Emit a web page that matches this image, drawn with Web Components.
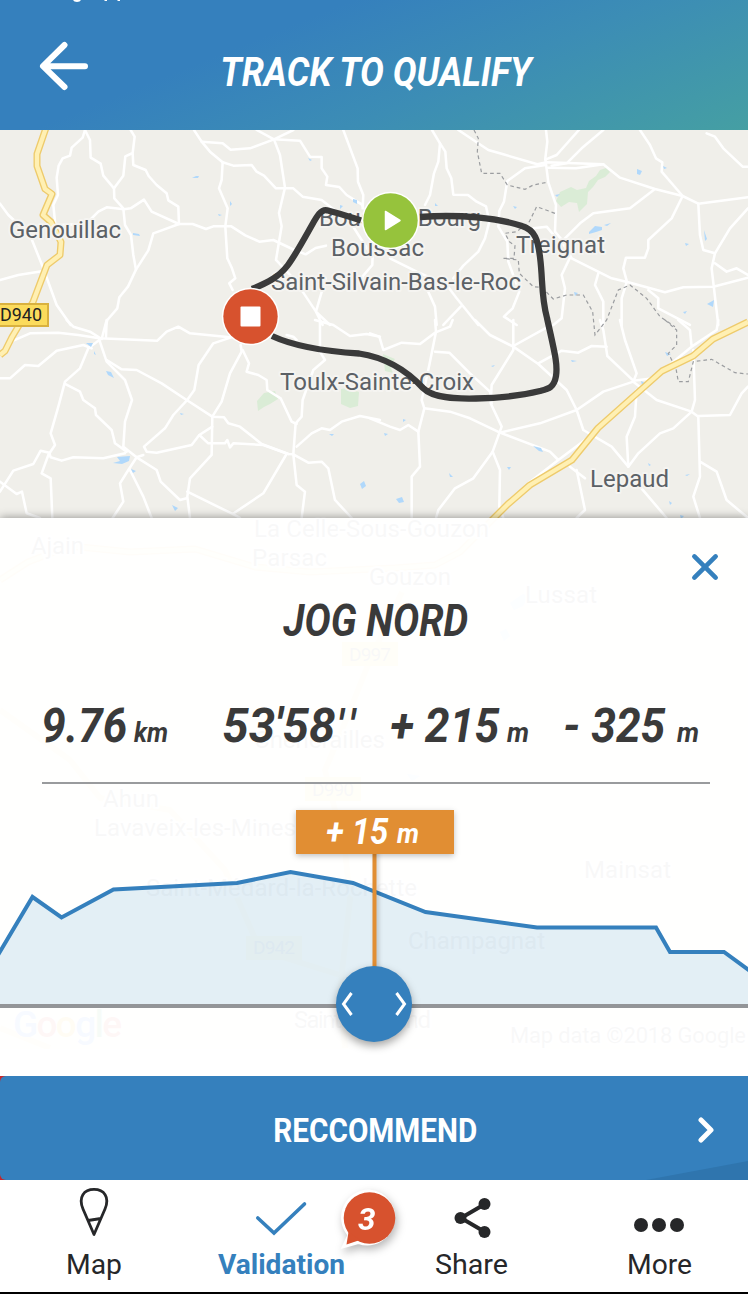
<!DOCTYPE html>
<html lang="en">
<head>
<meta charset="utf-8">
<title>Track to qualify</title>
<style>
html,body{margin:0;padding:0;background:#fff}
body{width:748px;height:1294px;overflow:hidden;font-family:Roboto,"Liberation Sans",sans-serif}
</style>
</head>
<body>
<track-screen></track-screen>
<script>
const define=(name,html)=>{
  const t=document.createElement('template');
  t.innerHTML=html;
  customElements.define(name,class extends HTMLElement{
    constructor(){super();this.attachShadow({mode:'open'}).appendChild(t.content.cloneNode(true));}
  });
};

/* One line of text set to an exact width; its box is cap height tall.
   With the "loose" attribute only the spacing is adjusted, not the glyphs. */
customElements.define('fit-text',class extends HTMLElement{
  connectedCallback(){
    const root=this.shadowRoot||this.attachShadow({mode:'open'});
    const w=+this.getAttribute('w'),s=+this.getAttribute('size');
    const h=Math.round(s*.711);
    root.innerHTML=`<style>:host{display:block;flex:none;width:${w}px;height:${h}px}svg{display:block;overflow:visible}
      text{font-family:Roboto,"Liberation Sans",sans-serif;font-size:${s}px;font-weight:${this.getAttribute('weight')||400};font-style:${this.hasAttribute('italic')?'italic':'normal'};fill:currentColor}</style>
      <svg width="${w}" height="${h}"><text x="${s<30?0:-.7}" y="${h-.4}" textLength="${w}" lengthAdjust="${this.hasAttribute('loose')?'spacing':'spacingAndGlyphs'}"></text></svg>`;
    root.querySelector('text').textContent=this.getAttribute('text');
  }
});

define('app-header',`<style>
:host{display:flex;box-sizing:border-box;height:130px;width:748px;color:#fff;background:linear-gradient(158deg,#3580bd 0%,#3580bd 33%,#3c8db5 62%,#459fa3 100%);align-items:flex-start}
.back{margin:41px 0 0 39px;width:50px;height:50px}
.title{margin:57px 0 0 132px}
.status{position:absolute;left:73px;top:0}
</style>
<svg class="status" width="50" height="3"><path d="M0 0H8Q7 2 4 2Q1 2 0 0ZM31.500 0h2.500v1h-2.500zM44.500 0h2.500v1h-2.500z" fill="#fff"/></svg>
<svg class="back" viewBox="0 0 50 50" fill="none" stroke="#fff" stroke-width="6" stroke-linecap="round" stroke-linejoin="round"><path d="M25.500 4 4 25.200 25.500 46M6 25.200H46"/></svg>
<fit-text class="title" text="TRACK TO QUALIFY" w="311" size="40.500" weight="700" italic></fit-text>`);

define('track-map',`<style>
:host{display:block}
svg{display:block;background:#f0efea}
.r path{fill:none;stroke:#fff;stroke-width:7.600;stroke-linejoin:round;stroke-linecap:round}
.w path{fill:#b0d8fb;stroke:none}
.d path{fill:none;stroke:#9b9da0;stroke-width:3.600;stroke-dasharray:11 9}
.y path{fill:none;stroke-linejoin:round}
text{font-family:Roboto,"Liberation Sans",sans-serif;font-size:24px;fill:#5c6166;paint-order:stroke;stroke:#f5f4f1;stroke-width:4px;stroke-linejoin:round}
.shield text{font-size:19px;fill:#222;stroke:none}
.shield rect{fill:#fbdb5c;stroke:#d9b13f;stroke-width:2}
.shield .far{stroke:none}
.shield .fart{fill:#5c6166}
.g text{stroke:none;font-size:37px;font-weight:500}
</style>
<svg width="748" height="919" viewBox="0 130 748 919">
<g fill="#daecd6">
<path d="M556 201 560 192 571 187 577 190 586 188 589 181 596 176 600 170 606 168 610 172 605 177 598 180 593 187 588 192 587 204 579 212 577 203 569 202 561 207Z"/>
<path d="M257 401 264 393 275 391 278 399 270 404 264 407 258 411Z"/>
<path d="M341 389 348 388 359 392 358 406 350 408 341 404Z"/>
<path d="M383 354 395 359 390 366 393 373 385 371Z"/>
</g>
<g class="r" transform="translate(0,125) scale(.3333)">
<path d="M255 15 248 38 215 68 210 92 188 100 176 122 170 158 174 210 160 240 166 300"/>
<path d="M255 15 270 45 272 98 302 116 310 152 342 190 343 220 370 250 375 300 393 330 400 390 408 434"/>
<path d="M392 15 404 35 398 84 400 120 437 135 446 153 470 180 500 205 505 226 535 245 537 297M398 84 376 94 370 152 342 190"/>
<path d="M180 300 240 298 270 285 295 260 320 247 372 253 392 250 432 224 455 260 537 297 578 297 618 312 640 304 694 304 736 331 778 350 820 345 877 372 917 388 947 369 978 362"/>
<path d="M537 297 485 316 460 325 445 376 408 434 384 485 358 517 352 550 322 585 318 600"/>
<path d="M582 15 605 50 630 80 668 112 700 122 755 120 770 140 792 152 828 190 880 190 908 215 965 225 1010 260 1050 290 1085 345 1118 395 1117 420 1088 454 1085 495"/>
<path d="M605 50 668 55 692 74 750 70 822 43 880 15"/>
<path d="M770 15 822 43 840 90 855 188 837 264 845 304 828 405 880 460 908 500 948 560 968 600M977 460 948 560 990 600"/>
<path d="M822 43 900 47 930 95 965 96 965 130 982 155 978 180 1018 186 1040 210 1085 238 1090 250M1030 15 1073 130 1074 170 1090 210 1088 250"/>
<path d="M668 112 665 165 657 190 683 250 676 304 682 400 696 430 706 460 688 475 698 495"/>
<path d="M0 236 25 270 90 330 130 430 170 540 212 600M0 465 55 450 130 438"/>
</g>
<g class="r" transform="translate(370,125) scale(.3333)">
<path d="M186 15 210 55 205 110 192 145 180 210 165 240"/>
<path d="M210 55 226 80 230 130 244 160 250 209 294 210 320 230 348 244 358 290 345 340 325 380 280 422 250 460"/>
<path d="M265 15 310 45 355 75 400 88 502 118 530 112 700 118 750 158 855 192 938 213 985 236 1134 217"/>
<path d="M528 15 532 50 526 100 535 172 558 240 555 320 580 350"/>
<path d="M640 0 560 90 526 104M700 15 635 70 590 115 545 122"/>
<path d="M526 120 465 130 412 168 402 230 388 258 385 305 412 350 415 410 448 500 428 550 402 575 440 600"/>
<path d="M600 390 575 350 630 295 670 265 780 250 855 192"/>
<path d="M535 128 618 130 700 118"/>
<path d="M810 15 840 60 858 100 877 112 875 140 938 213 905 280 835 345 835 370 825 398 768 398 760 430 770 467"/>
<path d="M1010 25 1035 35 1060 70 1118 125 1134 125M1134 250 1080 310 1035 385 1025 430 1045 600M1035 415 1070 440 1100 430 1134 450"/>
<path d="M985 236 990 330 1000 375 1035 385"/>
<path d="M490 310 530 305 555 335M600 390 605 400 725 460 775 472 885 502 940 487 1030 485 1134 458"/>
<path d="M600 398 575 450 585 490 575 580 550 600M685 445 675 480 700 530 700 600M770 472 755 520 755 600M835 495 865 520 865 550 960 600"/>
<path d="M60 400 140 440 230 480 260 520 325 600M272 545 220 600M170 490 195 545 200 600"/>
</g>
<g class="r" transform="translate(0,320) scale(.3333)">
<path d="M40 62 90 40 175 38 235 45 298 55 472 62 500 35 535 20 570 40 690 52"/>
<path d="M200 0 220 20 270 35 305 57 320 0M320 0 318 50"/>
<path d="M298 60 265 85 240 145 195 185 175 260 152 340 165 375 145 405 125 460 152 475 157 594"/>
<path d="M0 175 30 175 75 135 115 138 170 92 250 75 275 85"/>
<path d="M298 60 320 125 375 180 396 240 375 305 370 380 410 412 430 405"/>
<path d="M320 120 365 148 410 150 485 190 560 240 637 290 672 292 685 310 720 320 785 372 865 402 880 403"/>
<path d="M195 192 240 215 250 240 285 265 288 285 335 330 345 370 380 395"/>
<path d="M700 50 640 70 596 135 583 210 560 242 520 285 495 325 432 380 440 395 470 398 575 375 598 345 637 320"/>
<path d="M722 75 725 95 690 160 665 245 637 290 635 405 570 475 562 530 570 594M598 345 625 370 675 370 682 360 690 382 700 370 790 375 865 402"/>
<path d="M728 90 747 130 740 155 775 165 800 180 802 210 842 235 875 305 890 312"/>
<path d="M0 515 40 452 100 432 122 392 148 398 152 412 185 422 220 412 310 415 375 400"/>
<path d="M0 485 50 522 66 515 80 580 120 594M410 412 385 450 360 490 370 545 338 594M390 450 430 530 455 594"/>
<path d="M410 412 470 450 482 485 540 540 560 535M562 515 698 582 720 594M698 582 790 520 858 405"/>
<path d="M880 403 887 310 905 290 908 240 940 150 975 120 960 95 960 0M880 403 890 495 915 515 905 594M880 403 925 428 965 425 985 445 1005 540 1055 594"/>
<path d="M890 380 935 340 965 325 990 330 1025 305 1080 288 1140 300M945 0 1000 15 1050 48 1100 42 1140 50M860 45 880 50 890 60"/>
</g>
<g class="r" transform="translate(370,320) scale(.3333)">
<path d="M0 40 28 50 40 90 95 68 150 72 195 38 240 20 248 0M195 0 198 35 178 135 155 240 163 265 145 335 150 440 125 470 125 594"/>
<path d="M315 0 360 45 430 80 505 132 590 210 620 270 640 330 725 380 775 440M430 0 430 90 365 195 362 250 395 320 368 395 390 450 388 560 400 594"/>
<path d="M195 95 238 98 300 160 360 215 365 250M430 78 535 20 540 0M505 130 575 92 625 98 665 78 710 80"/>
<path d="M163 265 240 275 300 295 390 338 540 395 565 420 645 360 675 340M390 338 510 310 620 270 700 215 790 185 800 160 765 60 750 0M565 420 475 490M368 395 310 475 255 505 205 570 198 594"/>
<path d="M690 0 700 30 712 108 790 182 850 175 965 80 1040 30 1045 0M965 80 960 30 925 0M790 185 860 240 965 275 975 240 970 90"/>
<path d="M800 210 795 290 770 350 775 440 805 400 870 340 910 325 965 275 985 290 990 470 970 530 990 594M985 288 1080 285 1115 220 1134 200M990 425 1040 455 1070 540 1134 594"/>
<path d="M620 450 645 570 620 594M600 440 645 475M810 500 890 594M0 295 60 320 90 330 115 315 145 335"/>
</g>
<g class="w">
<path d="M192 178l4-2h3l-1 2zM133 233l6 1 1 2-7-1zM230 201l2 3-2 2zM218 214l4 1-3 1zM308 158l4 2-2 1zM353 199l4 1v4l-4-2zM589 232l6-6 7 1v3l-6 2-7 2zM604 225l7-2-4 3zM637 169l5 2-2 4-3-1zM555 195l5-1-3 3zM663 166l4 2-3 1zM685 243l4 1-3 2zM707 304l7-4-1 7zM683 312l4-1-2 3zM704 230l3 9-2 2zM513 206l4 1-2 2zM435 203l3 3h-3zM340 205l3 1-3 3zM574 292l4 1-3 3zM86 343h7l-2 4zM94 351l2 4-2-1zM106 371l5 1 3 6-6-3zM113 463l7-2-3-4 13-1-1 5-7 3zM131 469l5 2-3 2zM172 505l6 3-3 3zM360 484l4-3 2 5-4 3zM329 434h5l-2 2zM180 413l4 1-3 1zM491 366l4-1-2 2zM533 446l8 2 2 4-4-1zM507 467h4l-2 3zM449 473l4 4h-3zM396 499l6-2 2 5-5 1zM665 352l6 2-4 2zM641 381l4 2-3 2zM571 360l6 1-5 1zM685 475l5-1-3 2zM669 501l3 2-2 2zM680 515l4 1-3 3zM648 463l3 2-2 1zM384 433l4 1-3 2zM403 419l3 1-3 2z"/>
<path d="M510 603l13-9 5 2-5 10-9 4zM500 632l6-3 4 7-6 5zM407 774l13 2-8 5z"/>
</g>
<g class="d" transform="translate(370,125) scale(.3333)">
<path d="M312 15 325 40 322 80 335 145 390 145 412 180 465 193 490 180 530 172M555 265 500 245 478 290 440 320 405 325 418 350 435 362 432 400 400 400 445 405 448 445 490 485 515 487 550 522 590 510 640 510 668 560 675 630 710 585 745 495 780 480 830 520 870 575 915 605"/>
</g>
<g class="d" transform="translate(370,320) scale(.3333)"><path d="M885 0 920 30 920 75 895 100 918 145 925 185 955 185 970 125 1025 118 1095 158 1134 162"/></g>
<g class="y">
<path d="M47 125 37 154 37 166 45 189 52 194 43 215 51 222 61 242 60 255 47 265 33 302 12 337 5 351 0 355M748 322 713 339 693 356 662 371 598 428 572 460 530 485 508 504 492 520 460 552 435 565 395 568 310 572 255 567 195 549 130 552 70 546 28 562 0 580" stroke="#eecb6c" stroke-width="7"/>
<path d="M47 125 37 154 37 166 45 189 52 194 43 215 51 222 61 242 60 255 47 265 33 302 12 337 5 351 0 355M748 322 713 339 693 356 662 371 598 428 572 460 530 485 508 504 492 520 460 552 435 565 395 568 310 572 255 567 195 549 130 552 70 546 28 562 0 580" stroke="#fff0b3" stroke-width="4.300"/>
<path d="M402 592 370 660 340 735 325 770 345 850 350 900 340 990 345 1048M0 710 70 760 100 798 170 810 225 870 260 950 340 975M0 1028 50 1048" stroke="#ffe9a0" stroke-width="6"/>
</g>
<g class="shield"><rect x="-10" y="304" width="58" height="22"/><text x="0" y="321" textLength="42" lengthAdjust="spacingAndGlyphs">D940</text>
<rect class="far" x="342" y="642" width="56" height="24"/><text class="fart" x="349" y="660.500" textLength="42">D997</text>
<rect class="far" x="305" y="777" width="56" height="24"/><text class="fart" x="312" y="795.500" textLength="42">D990</text>
<rect class="far" x="246" y="936" width="56" height="24"/><text class="fart" x="253" y="954" textLength="42">D942</text></g>
<g transform="translate(0,-.2)">
<text x="9" y="238.500" textLength="112">Genouillac</text>
<text x="319" y="226.500" textLength="162">Boussac-Bourg</text>
<text x="331" y="256.500" textLength="93">Boussac</text>
<text x="271" y="290.500" textLength="250">Saint-Silvain-Bas-le-Roc</text>
<text x="516" y="253.500" textLength="89">Treignat</text>
<text x="280" y="390.500" textLength="194">Toulx-Sainte-Croix</text>
<text x="590" y="487.500" textLength="79">Lepaud</text>
<text x="31" y="554.500" textLength="53">Ajain</text>
<text x="254" y="537.500" textLength="235">La Celle-Sous-Gouzon</text>
<text x="252" y="566.500" textLength="75">Parsac</text>
<text x="369" y="585.500" textLength="82">Gouzon</text>
<text x="525" y="603.500" textLength="72">Lussat</text>
<text x="254" y="748.500" textLength="131">Chénérailles</text>
<text x="103" y="807.500" textLength="56">Ahun</text>
<text x="94" y="836.500" textLength="202">Lavaveix-les-Mines</text>
<text x="146" y="896.500" textLength="271">Saint-Médard-la-Rochette</text>
<text x="584" y="878.500" textLength="87">Mainsat</text>
<text x="408" y="949.500" textLength="137">Champagnat</text>
<text x="294" y="1028.500" textLength="137">Saint-Avit-Lend</text>
<text x="510" y="1043" textLength="236" style="font-size:22px">Map data ©2018 Google</text>
</g>
<g class="g"><text x="13" y="1037" textLength="109"><tspan style="fill:#4285f4">G</tspan><tspan style="fill:#ea4335">o</tspan><tspan style="fill:#fbbc05">o</tspan><tspan style="fill:#4285f4">g</tspan><tspan style="fill:#34a853">l</tspan><tspan style="fill:#ea4335">e</tspan></text></g>
<g fill="none" stroke="#3a3a3a" stroke-width="6.300"><path d="M361 220.500C350 217 338 213 327 210.300C321 209 317 216 312 225C304 239 296 254 288 265C279 277 267 283 252 289"/>
<path d="M420 217C460 214 498 218 522 226C535 230 538 240 540 257C543 280 541 296 547 318C554 350 558 364 556 376C554 388 548 389 540 391C520 396 500 398 476 398.500C455 399 433 398 423 388C410 374 389 358 359 353.500C335 352 300 349 272 336"/></g>
<circle cx="390.500" cy="220.500" r="28.700" fill="#fff"/><circle cx="390.500" cy="220.500" r="27.200" fill="#96c33c"/><path d="M385.500 211.500v18L400 220.500z" fill="#fff" stroke="#fff" stroke-width="1.500" stroke-linejoin="round"/>
<circle cx="250.500" cy="316.500" r="28.700" fill="#fff"/><circle cx="250.500" cy="316.500" r="27.200" fill="#d7522e"/><rect x="240.500" y="306.500" width="20" height="20" rx="1" fill="#fff"/>
</svg>`);

define('stat-row',`<style>
:host{display:flex;box-sizing:border-box;height:72px;margin:0 38px 0 42px;align-items:flex-end;padding-bottom:40px;width:668px;border-bottom:2px solid #999b9d}
</style>
<fit-text text="9.76" w="86" size="48" weight="700" italic></fit-text>
<fit-text text="km" w="34" size="28" weight="700" italic style="margin-left:6px"></fit-text>
<fit-text text="53'58" w="113" size="48" weight="700" italic style="margin-left:55px"></fit-text>
<fit-text text="''" w="19" size="46" weight="500" italic loose style="margin-left:1px"></fit-text>
<fit-text text="+ 215" w="109" size="48" weight="700" italic style="margin-left:35px"></fit-text>
<fit-text text="m" w="22" size="28" weight="700" italic style="margin-left:7px"></fit-text>
<fit-text text="- 325" w="102" size="48" weight="700" italic style="margin-left:35px"></fit-text>
<fit-text text="m" w="22" size="28" weight="700" italic style="margin-left:11px"></fit-text>`);

define('elevation-chart',`<style>
:host{display:block;position:relative;height:292px}
svg{display:block}
.tag{position:absolute;left:296px;top:26px;width:158px;height:44px;background:#e18e33;color:#fff;box-shadow:0 2px 6px rgba(0,0,0,.25);display:flex;box-sizing:border-box;padding:8px 0 0 31px}
.knob{position:absolute;left:336px;top:182px;width:76px;height:76px;border-radius:50%;background:#3580bd;box-shadow:0 4px 8px rgba(0,0,0,.35)}
</style>
<svg width="748" height="292" viewBox="0 784 748 292">
<path d="M0 951 32 897 61.500 917.500 113.500 889.500 237 883 290.500 872 353 883 425.500 912 537 927.500 656 927.500 670 952 724 952 748 970V1006H0Z" fill="#3a8cc0" fill-opacity=".14"/>
<path d="M0 1006H748" stroke="#939598" stroke-width="4"/>
<path d="M-2 955 32.500 897 61.500 917.500 113.500 889.500 237 883 290.500 872 353 883 425.500 912 537 927.500 656 927.500 670 952 724 952 750 971" fill="none" stroke="#3580bd" stroke-width="4"/>
<rect x="372.500" y="850" width="4" height="120" fill="#e18e33" style="filter:drop-shadow(2px 1px 2px rgba(0,0,0,.2))"/>
</svg>
<div class="tag"><fit-text text="+ 15" w="62" size="36" weight="700" italic></fit-text><fit-text text="m" w="22" size="28" weight="700" italic style="margin:5px 0 0 8px"></fit-text></div>
<div class="knob"><svg width="76" height="76" fill="none" stroke="#fff" stroke-width="3"><path d="M15.500 27 7.500 38 15.500 49M60.500 27 68.500 38 60.500 49"/></svg></div>`);

define('track-panel',`<style>
:host{display:flex;flex-direction:column;height:558px;background:rgba(255,255,255,.955);box-shadow:0 0 9px rgba(0,0,0,.42)}
.close{align-self:flex-end;width:30px;height:30px;margin:34px 28px 0 0}
.name{margin:23px 0 0 284px;color:#3a3a3a}
stat-row{color:#3a3a3a;margin-top:76px}
</style>
<svg class="close" viewBox="0 0 30 30" stroke="#3580bd" stroke-width="4.800" stroke-linecap="round"><path d="M4 4.500 26 26.500M26 4.500 4 26.500"/></svg>
<fit-text class="name" text="JOG NORD" w="185" size="44.500" weight="700" italic></fit-text>
<stat-row></stat-row>
<elevation-chart></elevation-chart>`);

define('action-button',`<style>
:host{display:block;height:104px;background:#c4282d}
.b{display:flex;position:relative;height:104px;border-radius:6px 0 0 6px;box-sizing:border-box;padding:42px 0 0 274px;color:#fff;background:#3580bd;overflow:hidden}
.chev{margin:-2px 0 0 220px}
.wedge{position:absolute;right:0;bottom:0}
</style>
<div class="b"><svg class="wedge" width="102" height="19"><path d="M0 19 102 0V19Z" fill="#2f75ae"/></svg>
<fit-text text="RECCOMMEND" w="204" size="34" weight="700"></fit-text>
<svg class="chev" width="20" height="28" fill="none" stroke="#fff" stroke-width="5" stroke-linecap="round" stroke-linejoin="round"><path d="M3 4 13 14 3 24"/></svg></div>`);

define('nav-item',`<style>:host{display:flex;flex-direction:column;align-items:center;position:relative;height:112px}.i{height:74px;width:100%;display:flex;justify-content:center}</style>
<div class="i"><slot name="icon"></slot></div><slot></slot>`);

define('bottom-nav',`<style>
:host{display:grid;grid-template-columns:187px 188px 193px 182px;box-sizing:border-box;height:114px;border-bottom:2px solid #000;background:#fff;color:#262729}
svg{display:block;overflow:visible}
.on{color:#3580bd}
.badge{position:absolute;filter:drop-shadow(2px 4px 4px rgba(0,0,0,.28))}
.badge text{font:italic 700 32px Roboto,"Liberation Sans",sans-serif;fill:#fff}
</style>
<nav-item><svg slot="icon" width="30" height="60" fill="none" stroke="currentColor" stroke-width="2.800"><path d="M15 54.500 4 29C-1 17 5 9.400 15 9.400S31 17 26 29ZM9 40.500 22 38.500" stroke-linejoin="round"/></svg><fit-text text="Map" w="56" size="28"></fit-text></nav-item>
<nav-item class="on"><svg slot="icon" width="50" height="60" fill="none" stroke="currentColor" stroke-width="3.600"><path d="M1.800 38 18 53 48.500 24" stroke-linecap="round"/></svg><fit-text text="Validation" w="127" size="28" weight="700"></fit-text>
</nav-item>
<nav-item><svg slot="icon" width="38" height="60"><path d="M32 24 8 38 32 52" fill="none" stroke="currentColor" stroke-width="4"/><g fill="currentColor"><circle cx="31.500" cy="24" r="6"/><circle cx="7.500" cy="38" r="6"/><circle cx="31.500" cy="52" r="6"/></g></svg><fit-text text="Share" w="73" size="28"></fit-text></nav-item>
<nav-item><svg slot="icon" width="50" height="60" fill="currentColor"><circle cx="7" cy="45" r="7"/><circle cx="25" cy="45" r="7"/><circle cx="43" cy="45" r="7"/></svg><fit-text text="More" w="65" size="28"></fit-text></nav-item>
<svg class="badge" style="left:338px;top:1186px" width="62" height="66"><path d="M31.500 4.500A27 27 0 1 1 20.500 57L4.500 61.500 10.500 49A27 27 0 0 1 31.500 4.500Z" fill="#fff" stroke="#fff" stroke-width="2"/><circle cx="31.500" cy="32" r="25.800" fill="#d7522e"/><path d="M10.500 46 8.500 58.500 22 54Z" fill="#d7522e"/><text x="20" y="43.500" textLength="17.500" lengthAdjust="spacingAndGlyphs">3</text></svg>`);

define('track-screen',`<style>
:host{display:block;width:748px}
.stage{display:grid;height:946px;overflow:hidden;background:#fff}
.stage>*{grid-area:1/1}
track-panel{margin-top:388px;position:relative;height:558px}
</style>
<app-header></app-header>
<div class="stage"><track-map></track-map><track-panel></track-panel></div>
<action-button></action-button>
<bottom-nav></bottom-nav>`);
</script>
</body>
</html>
